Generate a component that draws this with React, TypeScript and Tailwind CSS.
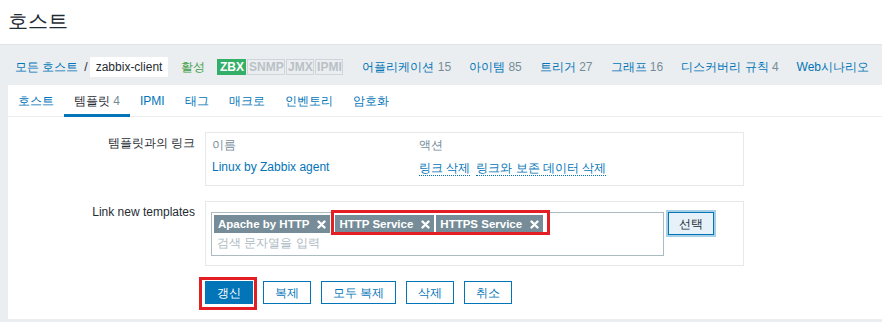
import React from "react";

function XIcon() {
  return (
    <svg width="9" height="9" viewBox="0 0 9 9" className="block">
      <path d="M1.5 1.5 L7.5 7.5 M7.5 1.5 L1.5 7.5" stroke="#ffffff" strokeWidth="2.4" strokeLinecap="round" />
    </svg>
  );
}

function Tag({ label, className = "" }: { label: string; className?: string }) {
  return (
    <span className={`flex items-center h-[18px] bg-[#768d99] text-white font-bold text-[11.5px] pl-[4px] pr-[4px] ${className}`}>
      <span className="leading-[18px]">{label}</span>
      <span className="ml-[8px]">
        <XIcon />
      </span>
    </span>
  );
}

export default function App() {
  const nav: [string, string | null][] = [
    ["어플리케이션", "15"],
    ["아이템", "85"],
    ["트리거", "27"],
    ["그래프", "16"],
    ["디스커버리 규칙", "4"],
    ["Web시나리오", null],
  ];
  const tabs: [string, string | null][] = [
    ["호스트", null],
    ["템플릿", "4"],
    ["IPMI", null],
    ["태그", null],
    ["매크로", null],
    ["인벤토리", null],
    ["암호화", null],
  ];
  return (
    <div className="w-[882px] h-[322px] overflow-hidden bg-[#ebeef0] text-[12px] text-[#1f2c33] font-['Liberation_Sans',sans-serif]">
      {/* Header */}
      <div className="h-[45px] bg-white border-b border-[#dfe4e7] flex items-center pl-[8px] pb-[2px]">
        <h1 className="text-[20px] leading-none font-normal">호스트</h1>
      </div>

      {/* Breadcrumb / host nav */}
      <div className="h-[40px] pt-[4px] flex items-center pl-[15px] whitespace-nowrap">
        <span className="text-[#0275b8]">모든 호스트</span>
        <span className="ml-[6px]">/</span>
        <span className="ml-[2px] h-[20px] px-[6px] bg-white flex items-center">zabbix-client</span>
        <span className="ml-[13px] text-[#429e47]">활성</span>
        <div className="ml-[12px] flex gap-[1px] font-bold text-[12px] leading-none">
          <span className="w-[29px] h-[16px] flex items-center justify-center bg-[#34af67] border border-[#34af67] text-white">ZBX</span>
          <span className="w-[38px] h-[16px] flex items-center justify-center bg-[#ebeef0] border border-[#cfd5d8] text-[#b9c1c6]">SNMP</span>
          <span className="w-[28px] h-[16px] flex items-center justify-center bg-[#ebeef0] border border-[#cfd5d8] text-[#b9c1c6]">JMX</span>
          <span className="w-[28px] h-[16px] flex items-center justify-center bg-[#ebeef0] border border-[#cfd5d8] text-[#b9c1c6]">IPMI</span>
        </div>
        <div className="ml-[19px] flex gap-[18px]">
          {nav.map(([t, n]) => (
            <span key={t} className="text-[#0275b8]">
              {t}
              {n && <span className="text-[#768d99]"> {n}</span>}
            </span>
          ))}
        </div>
      </div>

      {/* Panel */}
      <div className="ml-[8px] bg-white pb-[15px]">
        <div className="h-[32px] flex border-b border-[#ebeef0]">
          {tabs.map(([t, n], i) => (
            <div
              key={t}
              className={`h-[32px] px-[10px] flex items-center border-b-[3px] pt-[2px] ${
                i === 1 ? "border-[#0275b8] text-[#1f2c33]" : "border-transparent text-[#0275b8]"
              }`}
            >
              {t}
              {n && <span className="text-[#768d99]">&nbsp;{n}</span>}
            </div>
          ))}
        </div>

        <div className="pt-[15px] grid grid-cols-[187px_auto] gap-x-[10px] gap-y-[15px] items-start">
          {/* Row 1 */}
          <div className="text-right pt-[4px] leading-[14px]">템플릿과의 링크</div>
          <div className="w-[539px] border border-[#e6e9ec] px-[6px] pt-[1px] pb-[7px]">
            <div className="h-[22px] flex items-center text-[#768d99]">
              <div className="w-[207px]">이름</div>
              <div>액션</div>
            </div>
            <div className="h-[22px] flex items-center">
              <div className="w-[207px] text-[#0275b8]">Linux by Zabbix agent</div>
              <div className="flex text-[#0275b8]">
                <span className="leading-[14px] border-b border-dotted border-[#0275b8] mt-[2px]">링크 삭제</span>
                <span className="ml-[6px] leading-[14px] border-b border-dotted border-[#0275b8] mt-[2px]">링크와 보존 데이터 삭제</span>
              </div>
            </div>
          </div>

          {/* Row 2 */}
          <div className="text-right pt-[4px] leading-[14px]">Link new templates</div>
          <div className="w-[539px] border border-[#e6e9ec] px-[5px] pt-[10px] pb-[9px] flex items-start">
            <div className="w-[453px] h-[44px] border border-[#acbbc2]">
              <div className="flex pl-[2px] pt-[2px]">
                <Tag label="Apache by HTTP" className="mr-[5px]" />
                <span className="relative flex">
                  <Tag label="HTTP Service" className="mr-[2px]" />
                  <Tag label="HTTPS Service" />
                  <span className="absolute -left-[4px] -right-[7px] -top-[5px] -bottom-[2px] border-[3px] border-[#e31e24] pointer-events-none" />
                </span>
              </div>
              <div className="pl-[5px] mt-[3px] h-[14px] leading-[14px] text-[#acbbc2]">검색 문자열을 입력</div>
            </div>
            <button className="ml-[4px] w-[46px] h-[23px] border border-[#0275b8] bg-[#e6f1fa] text-[#1f2c33] text-[12px] leading-none shadow-[0_0_0_2px_rgba(2,117,184,0.35)]">
              선택
            </button>
          </div>

          {/* Buttons */}
          <div />
          <div className="flex gap-[10px]">
            <span className="relative flex">
              <button className="h-[23px] px-[11px] border border-[#0275b8] bg-[#0275b8] text-white text-[12px] leading-none">갱신</button>
              <span className="absolute -left-[6px] -right-[4px] -top-[4px] -bottom-[6px] border-[3px] border-[#e31e24] pointer-events-none" />
            </span>
            <button className="h-[23px] px-[11px] border border-[#0275b8] bg-white text-[#0275b8] text-[12px] leading-none">복제</button>
            <button className="h-[23px] px-[11px] border border-[#0275b8] bg-white text-[#0275b8] text-[12px] leading-none">모두 복제</button>
            <button className="h-[23px] px-[11px] border border-[#0275b8] bg-white text-[#0275b8] text-[12px] leading-none">삭제</button>
            <button className="h-[23px] px-[11px] border border-[#0275b8] bg-white text-[#0275b8] text-[12px] leading-none">취소</button>
          </div>
        </div>
      </div>
    </div>
  );
}
